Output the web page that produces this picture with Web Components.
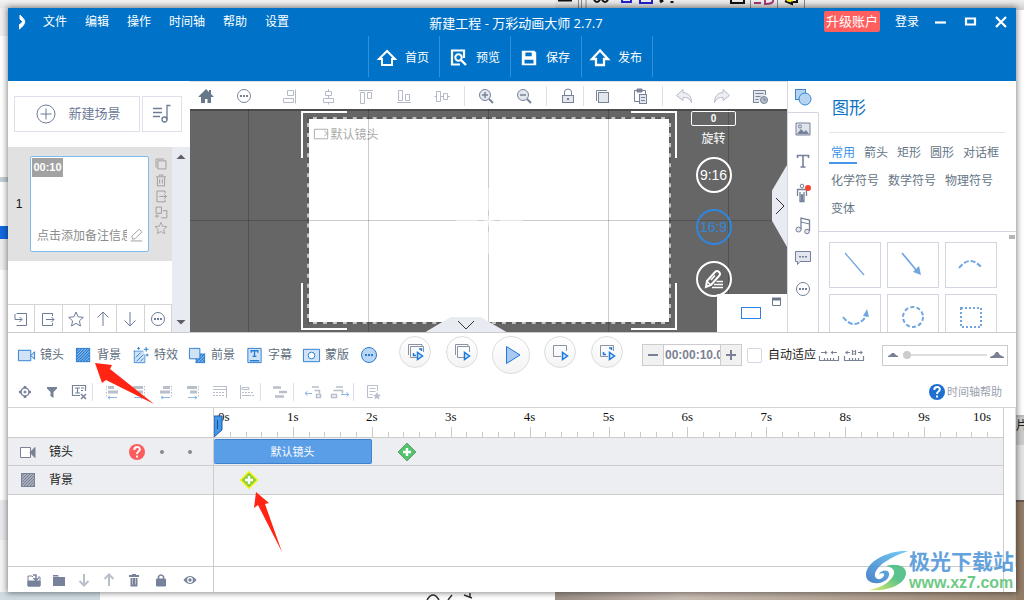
<!DOCTYPE html>
<html lang="zh-CN">
<head>
<meta charset="utf-8">
<title>新建工程 - 万彩动画大师 2.7.7</title>
<style>
html, body { height: 100%; margin: 0; }
body { font: 12px/16px "Liberation Sans", "Noto Sans CJK SC", sans-serif; color: #5c6c7c; overflow: hidden; }
</style>
</head>
<body>
<desk-top><studio-app></studio-app></desk-top>
<script>
const RESET = `
*, *::before, *::after { box-sizing: border-box; }
button, input { font: inherit; color: inherit; background: none; border: 0; padding: 0; margin: 0; border-radius: 0; min-width: 0; }
button { display: inline-flex; align-items: center; justify-content: center; white-space: nowrap; }
a { color: inherit; text-decoration: none; }
h1, h2, p { margin: 0; font-weight: normal; }
`;
const define = (tag, css, html) => customElements.define(tag, class extends HTMLElement {
  constructor() {
    super();
    this.attachShadow({ mode: 'open' });
  }
  connectedCallback() {
    if (this.shadowRoot.firstChild) return;
    const t = document.createElement('template');
    t.innerHTML = `<style>${RESET}${css}</style>` + (typeof html === 'function' ? html(this) : html);
    this.shadowRoot.append(t.content.cloneNode(true));
  }
});

const hatch = (x, y, w, h, c, bg) => {
  let d = '';
  for (let i = 3; i < w + h; i += 3) {
    const x1 = Math.min(i, w), y1 = Math.max(0, i - w), x2 = Math.max(0, i - h), y2 = Math.min(i, h);
    d += `M${x + x1} ${y + y1}L${x + x2} ${y + y2}`;
  }
  return `<rect x="${x}" y="${y}" width="${w}" height="${h}" fill="${bg}" stroke="${c}"/><path d="${d}" stroke="${c}" stroke-width="1.4"/>`;
};
const B = '#2a7dd1', L = '#cfe2f6', G = '#e3e6ec';
const diamond = (c, e) => `<path d="M10 1l9 9-9 9-9-9z" fill="${c}" stroke="${e}"/><path d="M10 6v8M6 10h8" stroke="#fff" stroke-width="2.4"/>`;
const playMini = `<path d="M12.500 10.500v7l5-3.500z" fill="#d6e8fb" stroke="#1f78dc" stroke-width="1.500"/>`;
const ICONS = {
  logo: '<path d="M8 3l4 4.500V11L8 7z" fill="#fff"/><path d="M12.500 8.500c1 3-2 6-5 8.500V12.500c2-1 3-2.500 3.500-4z" fill="#fff"/>',
  home: '<path d="M10 3L2 11h3v6h10v-6h3z" stroke-width="2"/>',
  preview: '<path d="M16 10V2.500H4v14h8" stroke-width="2.200"/><circle cx="10.500" cy="9.500" r="3.200" stroke-width="2"/><path d="M13 12l5 5" stroke-width="2.400"/>',
  save: '<path d="M2 2h14l2 2v14H2z" fill="currentColor" stroke="none"/><path d="M6 4h7v4H6zM5 12h10v4H5z" fill="#0073c8" stroke="none"/>',
  publish: '<path d="M10 2.500L2 11h4v6h8v-6h4z" stroke-width="2.300"/>',
  min: '<path d="M4 10.500h11" stroke-width="2.200"/>', max: '<path d="M5 6.500h9v6H5z" stroke-width="2.200"/>', close: '<path d="M5 5l10 10M15 5L5 15" stroke-width="2.200"/>',
  plus: '<circle cx="10" cy="10" r="9"/><path d="M10 4.500v11M4.500 10h11"/>',
  music: '<path d="M1 4.500h9M1 8.500h9M1 12.500h7M18.500 1.500h-3.500v14" stroke-width="1.300"/><circle cx="12.500" cy="15.500" r="2.500" stroke-width="1.300"/>',
  up: '<path d="M10 17V3M4.500 8.500L10 3l5.500 5.500"/>', down: '<path d="M10 3v14M4.500 11.500L10 17l5.500-5.500"/>',
  homeFill: '<path d="M10 3L2.500 10.500V11H5v6h4v-4h2.500v4H15v-6h2.500v-.5L15 8V4h-2v2z" fill="#66788a" stroke="none"/>',
  dots: '<circle cx="10" cy="10" r="6.500"/><path d="M6 9h2v2H6zM9 9h2v2H9zM12 9h2v2h-2z" fill="currentColor" stroke="none"/>',
  alignR: '<path d="M15.500 3.500v14"/><path d="M7.500 4.500h6v5h-6zM3.500 12.500h10v4h-10z"/>',
  alignC: '<path d="M10.500 3v2M10.500 9.500v3M10.500 16.500v2"/><path d="M7.500 5.500h6v4h-6zM5.500 12.500h10v4h-10z"/>',
  alignT: '<path d="M3 4.500h14M4.500 6.500h4v11h-4zM11.500 6.500h4v6h-4z"/>',
  alignB: '<path d="M3 16.500h14M4.500 4.500h4v10h-4zM11.500 8.500h4v6h-4z"/>',
  alignM: '<path d="M2.500 10.500h2M8.500 10.500h3M16 10.500h2M4.500 5.500h4v10h-4zM11.500 7.500h4v6h-4z"/>',
  zoomIn: `<circle cx="9" cy="9" r="5.500" fill="${G}"/><path d="M9 6v6M6 9h6" stroke-width="1.500"/><path d="M13 13l4 4" stroke-width="2"/>`,
  zoomOut: `<circle cx="9" cy="9" r="5.500" fill="${G}"/><path d="M6 9h6" stroke-width="1.500"/><path d="M13 13l4 4" stroke-width="2"/>`,
  lock: `<path d="M6.500 10V6q0-3 3.500-3t3.500 3v4"/><rect x="4.500" y="9.500" width="11" height="7" fill="${G}"/><path d="M9 12h2v2H9z" fill="currentColor" stroke="none"/>`,
  copy: `<path d="M4.500 15V4.500H15"/><rect x="6.500" y="6.500" width="10" height="10" fill="${G}"/>`,
  paste: `<path d="M9 15.500H4.500v-11h11V8"/><path d="M7 3h5v3H7z" fill="currentColor"/><rect x="9.500" y="8.500" width="7" height="9" fill="${G}"/><path d="M11 11.500h4M11 14.500h4"/>`,
  undo: `<path d="M9 3.500L2.500 9.500 9 14.500v-3c4-.5 6.500 1 8.500 5 0-6-3-9.500-8.500-10z" fill="#eceef2"/>`,
  redo: `<path d="M11 3.500l6.500 6-6.500 5v-3c-4-.5-6.500 1-8.500 5 0-6 3-9.500 8.500-10z" fill="#eceef2"/>`,
  history: `<path d="M9 16.500H3.500v-12h12V9" fill="${G}"/><path d="M5.500 7.500h8M5.500 10.500h5M5.500 13.500h3"/><circle cx="14" cy="14" r="3.500" fill="#b5bcc9"/><path d="M14 12v2h2"/>`,
  shapes: '<rect x="2.500" y="2.500" width="10" height="10" fill="#b5d3f3" stroke="#3c86d0"/><circle cx="12" cy="12" r="6" fill="#b5d3f3" stroke="#3c86d0"/>',
  image: '<path d="M3 4h14v12H3z" fill="#dfe3ea"/><path d="M4 15l4-5 3 3 2-2 3 4z" fill="currentColor" stroke="none"/><circle cx="7" cy="7.500" r="1.500"/>',
  text: '<path d="M4.500 7V4.500h11V7M10 4.500v11.500M7.500 16h5" stroke-width="1.600"/>',
  person: '<circle cx="9" cy="3" r="1.800"/><path d="M4.500 13V6.500h9V13M7 9v9.500h1.500V12h1v6.500H11V9" stroke-width="1.300"/><circle cx="15" cy="5" r="3" fill="#f8452e" stroke="none"/>',
  notes: `<path d="M8 14.500V3l8.500 2v11" stroke-width="1.300"/><path d="M8 7l8.500 2"/><circle cx="5.500" cy="14.500" r="2.500" fill="${G}"/><circle cx="14" cy="16.500" r="2.300" fill="${G}"/>`,
  chat: `<path d="M2.500 4.500h15v10H7l-2.500 3v-3h-2z" fill="${G}"/><path d="M6 9h2v1.500H6zM9 9h2v1.500H9zM12 9h2v1.500h-2z" fill="currentColor" stroke="none"/>`,
  dup: '<path d="M4.500 14V4.500h9"/><path d="M6.500 6.500h9v9h-9z"/>',
  trash: '<path d="M4.500 6.500h11M8 6V4.500h4V6M6 7v9.500h8V7M8.500 9v5M11.500 9v5"/>',
  exportI: '<path d="M14.500 7V4.500h-9v12h9V14M8 10.500h8M13.500 8l2.500 2.500-2.500 2.500"/>',
  importI: '<path d="M5.500 4.500h10v12h-10M4 5v5.500h7M8.500 8l2.500 2.500L8.500 13"/>',
  exportB: '<path d="M14.500 7V4.500h-10v12h10V14M8 10.500h8M13.500 8l2.500 2.500-2.500 2.500"/>',
  swap: '<path d="M4.500 4.500h6v7h-6zM12 8.500h4.500v8H10M4 14.500h4M6 12.500l-2 2 2 2"/>',
  star: '<path d="M10 3l2.100 4.800 5.200.6-3.900 3.500 1.100 5.100L10 14.400 5.500 17l1.100-5.100-3.900-3.500 5.200-.6z"/>',
  edit: '<path d="M6 13.500L5.500 10l8-7.500 3 3L9 13zM4 15.500h13"/>',
  rotateEdit: '<path d="M2 18l1-6 8-9q2-2 4 0t0 4l-8 9z" stroke-width="2"/><path d="M3 12.500l4 3.500M7 11l4-4.500" stroke-width="1.500"/><path d="M12.500 12.500H19M10 15.500h9M8 18.500h11" stroke-width="1.500"/>',
  camera: `<path d="M1.500 4.500h13v11h-13z" fill="${L}" stroke="${B}"/><path d="M14.500 10l4-4v8z" fill="${L}" stroke="${B}"/>`,
  cameraG: '<path d="M2.500 5.500h10v10h-10z" fill="#fff"/><path d="M12 10.500l5-5v10z" fill="currentColor"/>',
  cameraL: '<path d="M2.500 4.500h14v10h-14zM16 9l-3-2.500M16 9l-3 2.500"/>',
  bg: hatch(2.5, 2.5, 14, 14, B, '#a9cff4'),
  bgG: hatch(3.5, 3.5, 13, 13, '#7b8194', '#cdd1da'),
  effect: `<path d="M3 5.500h10M3.500 5v12.500h11V9" stroke="${B}"/><path d="M4 6h10v11H4z" fill="${L}" stroke="none"/><path d="M5 12l5-5M6 16l7-7M10 16l3-3" stroke="${B}"/><path d="M16 1v5M13.500 3.500h5M8 1v3M6.500 2.500h3M17 8v3M15.500 9.500h3" stroke="${B}"/>`,
  fg: hatch(8.500, 8.500, 9, 9, B, '#a9cff4') + `<path d="M1.500 2.500h11v11h-11z" fill="${L}" stroke="${B}"/>`,
  caption: `<path d="M3 2.500h14v15H3z" fill="${L}" stroke="${B}"/><path d="M6.500 7V5h7v2M10 5v6M8 11h4M5 15.500h10" stroke="${B}" stroke-width="1.400"/>`,
  mask: `<path d="M1.500 3.500h17v13h-17z" fill="${L}" stroke="${B}"/><circle cx="10" cy="10" r="3.500" fill="#fff" stroke="${B}"/>`,
  more: `<circle cx="10" cy="10" r="7.500" fill="#b9d7f5" stroke="${B}"/><path d="M6 9h2v2H6zM9 9h2v2H9zM12 9h2v2h-2z" fill="${B}" stroke="none"/>`,
  p1: '<path d="M3.500 13V2.500H17V5" stroke="#8a93a3"/><path d="M5.500 4.500h13V10M5.500 4.500v11H12" stroke="#8a93a3"/><path d="M8.500 11v2.500H11M14 7h2.500v2" stroke="#1f78dc" stroke-width="1.500"/>' + playMini,
  p2: '<path d="M3.500 13V2.500H16V5" stroke="#8a93a3"/><path d="M12 15.500H5.500v-11h12V10" stroke="#8a93a3"/>' + playMini,
  play: '<path d="M5.500 1.500v17l13.500-8.500z" fill="#a9c9f0" stroke="#1f78dc"/>',
  p4: '<path d="M11 14.500H3.500v-11h13V9" stroke="#8a93a3"/>' + playMini,
  p5: '<path d="M11 14.500H3.500v-11h13V9" stroke="#8a93a3"/><path d="M6.500 10v2.500H9M12 6h2.500v2" stroke="#1f78dc" stroke-width="1.500"/>' + playMini,
  minus: '<path d="M5 10h10" stroke-width="2"/>', add: '<path d="M5 10h10M10 5v10" stroke-width="2"/>',
  fitW: '<path d="M0.500 11v4.500h19V11M5.500 13v2M8.500 13v2M11.500 13v2M14.500 13v2M2 7.500h6M12 7.500h6" stroke-width="1.200"/><path d="M8.500 7.500L6 5.500v4zM11.500 7.500L14 5.500v4z" fill="currentColor" stroke="none"/>',
  fit1: '<path d="M0.500 11v4.500h19V11M5.500 13v2M8.500 13v2M11.500 13v2M14.500 13v2M2 7.500h4M14 7.500h4M8.500 5v5M11.500 5v5M10 6v1M10 8.500v1" stroke-width="1.200"/><path d="M1 7.500l2.500-2v4zM19 7.500l-2.500-2v4z" fill="currentColor" stroke="none"/>',
  hillS: '<path d="M5 12h10v-1l-2-1-2-2h-2l-2 2-2 1z" fill="currentColor" stroke="none"/>',
  hillL: '<path d="M3 13h14v-1l-4-2-2-3h-2l-2 3-4 2z" fill="currentColor" stroke="none"/>',
  target: '<circle cx="10" cy="10" r="4" stroke-width="1.500"/><path d="M10 4v2M10 14v2M4 10h2M14 10h2" stroke-width="2.500"/><circle cx="10" cy="10" r="1" fill="currentColor"/>',
  filter: '<path d="M5 5h10v1.500L11.500 10v6l-3-2v-4L5 6.500z" fill="currentColor" stroke="none"/>',
  textX: '<path d="M11 13.500H3.500v-10h13V9M6 6h5M8.500 6v5M12 6h3M12 8.500h2M6 11h5" stroke-width="1.200"/><path d="M12 12l5 5M17 12l-5 5" stroke-width="1.500"/>',
  a1: '<path d="M4.500 4v12" stroke-dasharray="1.500 1.500"/><path d="M6 5.500h6M6 10h10" stroke-width="3"/><path d="M6 15.500h9M8 14l-2 1.500L8 17" stroke="#8ab6e4"/>',
  a2: '<path d="M15.500 4v12" stroke-dasharray="1.500 1.500"/><path d="M4 5.500h10M7 10h7" stroke-width="3"/><path d="M5 15.500h9M12 14l2 1.500-2 1.500" stroke="#8ab6e4"/>',
  a3: '<path d="M15.500 4v12" stroke-dasharray="1.500 1.500"/><path d="M7 5.500h7M4 10h10" stroke-width="3"/><path d="M5 15.500h9M7 14l-2 1.500L7 17" stroke="#8ab6e4"/>',
  a4: '<path d="M3 4.500h14M3 7.500h14M16.500 4v12"/><path d="M3 10.500h12M3 13.500h12" stroke-dasharray="2 1"/>',
  a5: '<path d="M3.500 3v14M5 5.500h7v2H5zM5 13.500h7"/><path d="M5 10.500h12M9 13.500h8" stroke-dasharray="2 1"/>',
  a6: '<path d="M3 5.500h8M9 10h8M5 14.500h9" stroke-width="2.500"/>',
  a7: '<path d="M9 5h7M11.500 8.500h5v3M13.500 12.500h4v3h-4z" stroke-width="1.500"/><path d="M2 11.500h7M4.500 9.500l-2.500 2 2.500 2" stroke="#8ab6e4"/>',
  a8: '<path d="M6 5h7M3.500 8.500h9v3M1.500 12.500h5v3h-5z" stroke-width="1.500"/><path d="M11 12.500h8M16.500 10.500l2.500 2-2.500 2" stroke="#8ab6e4"/>',
  noteStar: '<path d="M10 15.500H4.500v-12h10V9M6.500 6.500h6M6.500 9.500h6M6.500 12.500h3"/><path d="M14 10l1.200 2.600 2.800.3-2.100 1.900.6 2.700L14 16l-2.500 1.500.6-2.700L10 12.900l2.800-.3z" fill="currentColor" stroke="none"/>',
  fImport: '<path d="M4 6h4l1 1M4 6v10h12V7h-2" fill="none"/><path d="M4 11h12v5H4z" fill="currentColor"/><path d="M9 5h3v5M9.500 8l2.500 2.500L14.500 8" stroke-width="1.500"/>',
  folder: '<path d="M4 5h5l1 1.500h-6zM4 7h12v9H4z" fill="currentColor" stroke="none"/>',
  arD: '<path d="M10 4v11M5.500 11l4.500 4.500 4.500-4.500" stroke-width="2"/>', arU: '<path d="M10 16V5M5.500 9L10 4.500 14.500 9" stroke-width="2"/>',
  trashF: '<path d="M5 6h10M8 5h4M7.500 8v7.500h5V8M10 8v7" stroke-width="2"/>',
  lockF: '<path d="M5.500 9h9v7h-9z" fill="currentColor"/><path d="M7.500 9V6.500Q10 3.500 12.500 6.500V9" stroke-width="1.500"/>',
  eye: '<path d="M3.500 10Q10 2 16.500 10 10 18 3.500 10z" fill="currentColor" stroke="none"/><circle cx="10" cy="10" r="2.300" stroke="#fff" stroke-width="1.200"/>',
  help: '<circle cx="10" cy="10" r="8" fill="currentColor" stroke="none"/><path d="M7.300 8q0-3 2.800-3t2.700 2.500q0 1.200-1.400 2T10 12" stroke="#fff" stroke-width="2"/><path d="M9 13.500h2v2H9z" fill="#fff" stroke="none"/>',
  addG: diamond('#52c46c', '#6f9a78'),
  addY: '<path d="M10 1l9 9-9 9-9-9z" fill="#f6f619" stroke="#f6f619"/><path d="M10 2.500l7.500 7.500-7.500 7.500L2.500 10z" fill="#8ed03c" stroke="none"/><path d="M10 6v8M6 10h8" stroke="#fff" stroke-width="2.400"/>',
  triU: '<path d="M5.500 12l4.500-4.500 4.500 4.500z" fill="#5f5f66" stroke="none"/>', triD: '<path d="M5.500 8l4.500 4.500L14.500 8z" fill="#5f5f66" stroke="none"/>',
  win: '<path d="M5.500 6.500h8v7h-8z" stroke="#66788a"/><path d="M5 7h9" stroke="#66788a" stroke-width="3"/>',
  sLine: '<path d="M10 5l19 22" stroke-width="1.300"/>',
  sArrow: '<path d="M9 5l15 18" stroke-width="1.700"/><path d="M28 27l-8-3 6-6z" fill="currentColor" stroke="none"/>',
  sArc: '<path d="M8 20q11-14 23 0" stroke-width="2" stroke-dasharray="5 2"/>',
  sArcA: '<path d="M8 17q10 13 21 2l2-4" stroke-width="2" stroke-dasharray="5 2"/><path d="M28 16l4-7 2 8z" fill="currentColor" stroke="none"/>',
  sCirc: '<circle cx="20" cy="17" r="10" stroke-width="2" stroke-dasharray="4 2.300"/>',
  sRect: '<rect x="10" y="8" width="20" height="19" stroke-width="2" stroke-dasharray="2 2"/>'
};

define('x-icon', `:host { display: inline-block; flex: none; line-height: 0; } svg { display: block; overflow: visible; }`, el => {
  const s = el.getAttribute('size') || 20, vb = el.getAttribute('box') || '0 0 20 20';
  return `<svg width="${s}" height="${s}" viewBox="${vb}" fill="none" stroke="currentColor" aria-hidden="true">${ICONS[el.getAttribute('name')]}</svg>`;
});
const tool = (name, label, cls = '', size = 20) => `<button class="${cls}" aria-label="${label}"><x-icon name="${name}" size="${size}"></x-icon></button>`;

define('desk-top', `
:host { display: block; position: relative; height: 100%; padding: 8px; box-sizing: border-box; overflow: hidden;
  background:
   linear-gradient(#f2f2f2, #e6e6e6) left top / 555px 8px no-repeat,
   linear-gradient(#eee, #d4d4d4) right top / calc(100% - 555px) 10px no-repeat,
   linear-gradient(#fff 0 405px, #bbb 405px 407px, #ccc 407px 435px, #e4e4e4 435px 490px, #67594f 490px 492px, #947d68 492px) right 10px / 8px 100% no-repeat,
   linear-gradient(90deg, #cfdbe0 0 100px, #fff 100px 555px, #9b8f86 555px, #c9bdb4 680px, #9b8672) left bottom / 100% 8px no-repeat,
   linear-gradient(#f0f0f0 0 36px, #fff 36px 177px, #c3cfd5 177px 182px, #fff 182px 226px, #1169e0 226px 239px, #eee 239px 270px, #fff 270px 500px, #e8eaee 500px 540px, #f4f4f4 540px) left top / 8px 100% no-repeat; }
.scrap { position: absolute; display: block; }
.top { left: 555px; top: 0; } .bottom { left: 420px; bottom: 0; }
.side { right: 0; top: 418px; width: 8px; overflow: hidden; color: #222; }
.win { position: relative; height: 100%; background: #fff; box-shadow: 0 0 6px 1px #0007; }
`, `
<svg class="scrap top" width="260" height="8" fill="none" stroke="#111" aria-hidden="true"><path d="M3 .5h14" stroke-width="2"/><path d="M23.500 0v8M26.500 0v8M31 0v8" stroke="#888"/><path d="M39 0q3 4 6 0M47 0q3 4 6 0" stroke-width="2"/><path d="M67 0v2h9V0M85 0v3h12V0" stroke="#22c" stroke-width="2"/><path d="M105 2l3-2M117 1v2" stroke-width="3"/><path d="M176 0v3h13V0" stroke-width="2"/><path d="M195.500 0v8M222.500 0v8M249.500 0v8" stroke="#888"/><path d="M199 3h7M210 0v4q9 0 8-4" stroke="#a33775" stroke-width="2"/><path d="M230 1l7 3v-2h5V0" stroke="#111" stroke-width="2"/><path d="M232 0h6" stroke="#fe0" stroke-width="3"/></svg>
<svg class="scrap bottom" width="60" height="7" fill="none" stroke="#333" stroke-width="1.500" aria-hidden="true"><path d="M7 7q6-10 12 0M28 7l4-5M44 2l8 3M50 0v5"/></svg>
<span class="scrap side">片</span>
<div class="win"><slot></slot></div>`);

define('title-bar', `
:host { display: grid; grid-template-rows: 28px 45px; background: #0073c8; color: #fff; }
.row { display: grid; grid-template-columns: 1fr auto 1fr; align-items: center; }
nav, .right { display: flex; align-items: center; }
nav { gap: 18px; padding-left: 4px; }
nav x-icon { margin-right: -7px; }
h1 { font: 13px/20px "Open Sans", "Noto Sans CJK SC", sans-serif; padding: 2px 0 0 8px; }
.right { justify-content: flex-end; }
.up { background: #ff5f5f; border-radius: 2px; height: 21px; padding: 0 2px; font-size: 13px; line-height: 20px; align-self: start; margin-top: 2px; }
.login { margin: 0 7px 0 15px; }
.w { width: 30px; height: 26px; }
.main { display: flex; justify-content: center; padding-bottom: 4px; margin-left: -3px; }
.main button { width: 71px; gap: 8px; border-left: 1px solid #2d91db; padding: 2px 2px 0 0; }
.main button:last-child { border-right: 1px solid #2d91db; width: 72px; }
`, `
<div class="row"><nav><x-icon name="logo"></x-icon><button>文件</button><button>编辑</button><button>操作</button><button>时间轴</button><button>帮助</button><button>设置</button></nav>
<h1>新建工程 - 万彩动画大师 2.7.7</h1>
<div class="right"><button class="up">升级账户</button><button class="login">登录</button>${tool('min', '最小化', 'w')}${tool('max', '最大化', 'w')}${tool('close', '关闭', 'w')}</div></div>
<div class="main"><button><x-icon name="home"></x-icon>首页</button><button><x-icon name="preview"></x-icon>预览</button><button><x-icon name="save" size="18"></x-icon>保存</button><button><x-icon name="publish"></x-icon>发布</button></div>`);

define('scene-panel', `
:host { display: flex; flex-direction: column; background: #fff; color: #6d7b98; min-height: 0; }
.new { display: grid; grid-template-columns: 1fr 40px; gap: 2px; padding: 15px 8px 15px 6px; height: 66px; }
.new button { border: 1px solid #dde1ea; gap: 12px; font-size: 13px; padding-left: 3px; }
.new button + button { padding: 0; }
.body { flex: 1; display: grid; grid-template-columns: 1fr 18px; min-height: 0; }
.list { display: flex; flex-direction: column; justify-content: space-between; min-width: 0; }
.scene { background: #e1e1e1; display: grid; grid-template-columns: 22px 119px 1fr; padding: 9px 0; color: #999; }
.no { color: #111; place-self: center; }
.card { height: 96px; border: 1px solid #7cbdf0; border-radius: 2px; background: #fff; display: flex; flex-direction: column; justify-content: space-between; align-items: flex-start; padding: 1px; }
.time { background: #a2a2a2; color: #fff; font-size: 11px; font-weight: bold; line-height: 19px; padding: 0 1px; width: 31px; text-align: center; }
.memo { display: flex; align-items: center; padding: 0 0 3px 5px; height: 26px; }
.memo input { width: 90px; color: #8b8b8b; text-overflow: clip; }
.acts { display: flex; flex-direction: column; align-items: center; }
.acts button { height: 16px; width: 20px; }
.bar { display: grid; grid-template-columns: repeat(6, 1fr); border-top: 1px solid #d4d4d4; height: 28px; }
.bar button { border-right: 1px solid #d4d4d4; }
.scroll { background: #e8ebf1; display: flex; flex-direction: column; justify-content: space-between; align-items: center; }
`, `
<div class="new"><button><x-icon name="plus"></x-icon>新建场景</button>${tool('music', '背景音乐')}</div>
<div class="body"><div class="list"><div class="scene"><span class="no">1</span>
<div class="card"><span class="time">00:10</span><label class="memo"><input value="点击添加备注信息" aria-label="备注"><x-icon name="edit" size="18"></x-icon></label></div>
<div class="acts">${tool('dup', '复制', '', 18)}${tool('trash', '删除', '', 18)}${tool('exportI', '导出', '', 18)}${tool('swap', '替换', '', 18)}${tool('star', '收藏', '', 16)}</div></div>
<div class="bar">${tool('importI', '导入场景')}${tool('exportB', '导出场景')}${tool('star', '收藏场景')}${tool('up', '上移')}${tool('down', '下移')}${tool('dots', '更多')}</div></div>
<div class="scroll"><x-icon name="triU"></x-icon><x-icon name="triD"></x-icon></div></div>`);

define('edit-bar', `
:host { display: flex; align-items: center; height: 28px; padding-left: 1px; color: #78839a; border-top: 1px solid #dcdfe8; background: #fff; }
div { display: flex; gap: 8px; }
button { width: 30px; height: 26px; }
.pale { color: #b4bac8; }
i { width: 14px; height: 20px; background: linear-gradient(#dfe1e8, #dfe1e8) 7px 0 / 1px 100% no-repeat; }
i.none { width: 16px; background: none; } i.s { width: 4px; background-position-x: 0; }
`, `
<div>${tool('homeFill', '主页')}${tool('dots', '更多')}</div><i class="none"></i>
<div class="pale">${tool('alignR', '右对齐')}${tool('alignC', '居中')}${tool('alignT', '顶对齐')}${tool('alignB', '底对齐')}${tool('alignM', '垂直居中')}</div><i></i>
<div>${tool('zoomIn', '放大')}${tool('zoomOut', '缩小')}</div><i></i>
<div>${tool('lock', '锁定')}</div><i class="s"></i>
<div>${tool('copy', '复制')}${tool('paste', '粘贴')}</div><i></i>
<div>${tool('undo', '撤销', 'pale')}${tool('redo', '重做', 'pale')}${tool('history', '历史')}</div>`);

define('stage-view', `
:host { display: grid; position: relative; overflow: hidden; background: #666; place-items: center; min-height: 0; }
.frame, .guides, .corners { grid-area: 1 / 1; }
.frame { width: 364px; height: 207px; border: 2px dashed #5c5c5c; background: linear-gradient(#fff, #fff) padding-box, #c4c4c4 border-box; display: flex; align-items: flex-start; padding: 6px 3px; color: #aaa; }
.frame span { line-height: 20px; }
.guides { width: 100%; height: 100%; background:
  linear-gradient(#0003, #0003) center / 1px 100% no-repeat, linear-gradient(#0003, #0003) calc(50% - 120px) 0 / 1px 100% no-repeat, linear-gradient(#0003, #0003) calc(50% + 120px) 0 / 1px 100% no-repeat,
  linear-gradient(#0003, #0003) calc(50% - 240px) 0 / 1px 100% no-repeat, linear-gradient(#0003, #0003) calc(50% + 240px) 0 / 1px 100% no-repeat, linear-gradient(#0003, #0003) center / 100% 1px no-repeat, linear-gradient(#0004, #0004) 0 0 / 100% 2px no-repeat; }
.corners { width: 376px; height: 219px; }
.cross { grid-area: 1 / 1; }
.tools { position: absolute; right: 51px; top: 2px; display: flex; flex-direction: column; align-items: center; color: #fff; width: 45px; }
.tools input { width: 45px; height: 15px; border: 1px solid #fff; border-radius: 2px; text-align: center; font: bold 10px/13px "Liberation Sans", sans-serif; }
.tools label { margin: 0 0 10px; display: flex; flex-direction: column; gap: 5px; align-items: center; }
.tools button { width: 36px; height: 36px; border: 2px solid #fff; border-radius: 50%; font-size: 14px; margin-bottom: 16px; }
.tools .on { color: #2f86dd; border-color: #2f86dd; }
.tab { position: absolute; background: #e8ebf1; color: #333; }
.b { left: calc(50% - 63px); bottom: 0; width: 81px; height: 15px; clip-path: polygon(0 100%, 31% 0, 68% 0, 100% 100%); }
.r { right: 0; top: 56px; width: 15px; height: 82px; clip-path: polygon(0 31%, 100% 0, 100% 100%, 0 68%); }
.mini { position: absolute; right: 0; bottom: 0; width: 70px; height: 38px; background: #fff; display: flex; align-items: center; justify-content: flex-end; }
.mini i { width: 20px; height: 12px; border: 1px solid #2f7fe8; margin-right: 6px; }
.mini x-icon { align-self: flex-start; margin-top: -2px; }
`, `
<div class="frame"><x-icon name="cameraL" size="19"></x-icon><span>默认镜头</span></div>
<div class="guides"></div>
<svg class="corners" viewBox="0 0 376 219" fill="none" stroke="#fff" stroke-width="2" aria-hidden="true"><path d="M1 47V1H46M330 1H375V47M375 172V218H330M46 218H1V172"/></svg>
<svg class="cross" width="66" height="66" stroke="#fff" aria-hidden="true"><path d="M0 33.500h22M28 33.500h10M44 33.500h22M33.500 0v22M33.500 28v10M33.500 44v22" stroke-width="2"/></svg>
<div class="tools"><label><input value="0" aria-label="旋转角度"><span>旋转</span></label><button>9:16</button><button class="on">16:9</button><button aria-label="自定义"><x-icon name="rotateEdit" size="20"></x-icon></button></div>
<button class="tab b" aria-label="收起"><svg width="18" height="10" fill="none" stroke="currentColor"><path d="M1 1l8 8 8-8"/></svg></button>
<button class="tab r" aria-label="收起面板"><svg width="10" height="18" fill="none" stroke="currentColor"><path d="M1 1l8 8-8 8"/></svg></button>
<div class="mini"><i></i><x-icon name="win"></x-icon></div>`);

define('side-tabs', `
:host { display: flex; flex-direction: column; border-left: 1px solid #d2d6e0; background: #fff; color: #75809a; }
button { height: 32px; border-right: 1px solid #d2d6e0; flex: none; }
button.first { border-right-color: transparent; border-bottom: 1px solid #d2d6e0; }
.fill { flex: 1; border-right: 1px solid #d2d6e0; }
`, `${tool('shapes', '图形', 'first')}${tool('image', '图片')}${tool('text', '文本')}${tool('person', '角色')}${tool('notes', '音乐')}${tool('chat', '气泡')}${tool('dots', '更多')}<div class="fill"></div>`);

define('shape-panel', `
:host { display: flex; flex-direction: column; background: #fff; color: #667686; min-height: 0; }
h2 { font-size: 17px; line-height: 24px; color: #0b72c4; padding: 16px 3px 11px; margin: 0 11px 0 10px; border-bottom: 1px solid #e3e6ec; }
nav { display: flex; flex-wrap: wrap; gap: 7px 9px; padding: 10px 8px 11px 12px; border-bottom: 1px solid #d2d6e0; }
nav button { height: 21px; border-bottom: 2px solid transparent; font-size: 12px; }
nav .on { color: #3b93ea; border-color: #4697e8; padding: 0 2px; margin: 0 -2px; }
.wrap { flex: 1; min-height: 0; overflow: hidden; display: flex; justify-content: space-between; }
.grid { display: grid; grid-template-columns: repeat(3, 52px); grid-auto-rows: 46px; gap: 6px; padding: 10px; color: #6fa6df; }
.grid button { border: 1px solid #d2d6e0; }
.thumb { width: 6px; height: 4px; background: #b5b5b5; margin: 3px 1px 0 0; }
`, () => `
<h2>图形</h2><nav><button class="on">常用</button><button>箭头</button><button>矩形</button><button>圆形</button><button>对话框</button><button>化学符号</button><button>数学符号</button><button>物理符号</button><button>变体</button></nav>
<div class="wrap"><div class="grid">${[['sLine', '直线'], ['sArrow', '箭头'], ['sArc', '弧线'], ['sArcA', '弧线箭头'], ['sCirc', '圆'], ['sRect', '方形']].map(([n, l]) => `<button aria-label="${l}"><x-icon name="${n}" size="40" box="0 0 40 34"></x-icon></button>`).join('')}</div><div class="thumb"></div></div>`);

define('play-bar', `
:host { display: grid; grid-template-columns: auto 1fr auto; align-items: center; height: 44px; padding: 0 8px 0 9px; }
div { display: flex; align-items: center; }
.add button { width: 57px; gap: 4px; justify-content: flex-start; }
.add .more { width: 20px; }
.play { justify-content: center; gap: 15px; padding-left: 2px; }
.play button { width: 32px; height: 32px; border: 1px solid #ddd; border-radius: 50%; background: linear-gradient(#fff, #f4f4f4); margin-bottom: 6px; }
.play .big { width: 38px; height: 38px; margin: 0 -1px; }
.spin { border: 1px solid #ccc; height: 22px; color: #7b8194; }
.spin button { width: 21px; height: 20px; background: #f1f1f1; border-right: 1px solid #ccc; }
.spin button:last-child { border-right: 0; border-left: 1px solid #ccc; }
.spin input { width: 56px; font-weight: bold; text-overflow: clip; padding-left: 1px; }
input[type=checkbox] { appearance: none; width: 15px; height: 15px; border: 1px solid #cfd8e4; border-radius: 2px; margin: 0 6px 0 5px; }
label { display: flex; align-items: center; color: #222; }
.fit { color: #7b8194; gap: 5px; margin-left: 3px; }
.zoom { border: 1px solid #ccc; height: 21px; margin-left: 18px; color: #7b8194; }
input[type=range] { appearance: none; width: 84px; height: 20px; }
input[type=range]::-webkit-slider-runnable-track { height: 2px; background: #ddd; }
input[type=range]::-webkit-slider-thumb { appearance: none; width: 8px; height: 8px; margin-top: -3px; border-radius: 50%; background: #ccc; }
`, `
<div class="add"><button><x-icon name="camera" size="19"></x-icon>镜头</button><button><x-icon name="bg" size="19"></x-icon>背景</button><button><x-icon name="effect" size="19"></x-icon>特效</button><button><x-icon name="fg" size="19"></x-icon>前景</button><button><x-icon name="caption" size="19"></x-icon>字幕</button><button><x-icon name="mask" size="19"></x-icon>蒙版</button>${tool('more', '更多', 'more')}</div>
<div class="play">${tool('p1', '播放全部镜头')}${tool('p2', '播放全部')}${tool('play', '播放', 'big')}${tool('p4', '播放场景')}${tool('p5', '播放镜头')}</div>
<div><div class="spin">${tool('minus', '减少')}<input value="00:00:10.00" aria-label="时长">${tool('add', '增加')}</div><label><input type="checkbox">自动适应</label><div class="fit">${tool('fitW', '适应宽度')}${tool('fit1', '原始比例')}</div><div class="zoom"><x-icon name="hillS"></x-icon><input type="range" value="0" aria-label="缩放"><x-icon name="hillL"></x-icon></div></div>`);

define('track-bar', `
:host { display: flex; align-items: center; height: 30px; padding: 0 14px 0 3px; color: #77829a; }
button { width: 27px; height: 24px; }
.pale { color: #b9bfca; }
i { width: 6px; height: 18px; border-left: 1px solid #dfe1e8; }
a { margin-left: auto; display: flex; align-items: center; font-size: 11px; color: #98a2ae; }
a x-icon { color: #1f6fd0; }
`, `${tool('target', '定位')}${tool('filter', '筛选')}${tool('textX', '清除')}<i></i>${['a1', 'a2', 'a3', 'a2', 'a4', 'a5'].map((n, k) => tool(n, '对齐' + (k + 1), 'pale')).join('')}<i></i>${tool('a6', '排列', 'pale')}<i></i>${tool('a7', '前移', 'pale')}${tool('a8', '后移', 'pale')}<i></i>${tool('noteStar', '备注', 'pale')}
<a href="#help"><x-icon name="help"></x-icon>时间轴帮助</a>`);

define('time-ruler', `
:host { display: grid; grid-template-columns: repeat(10, 1fr); position: relative; font: 13px/16px "Liberation Serif", serif; color: #111; height: 100%; }
.sec { position: relative; display: grid; grid-template-columns: repeat(5, 1fr); align-items: end; }
.sec i { height: 5px; border-left: 1px solid #ccc; }
.sec i:first-of-type { height: 10px; }
.sec span { position: absolute; top: 1px; left: 0; transform: translateX(-50%); }
.sec .zero { left: 4px; transform: none; }
.end { position: absolute; right: 12px; top: 1px; }
.head { position: absolute; left: 0; top: 7px; }
`, () => Array.from({ length: 10 }, (_, i) => `<div class="sec"><span${i ? '' : ' class="zero"'}>${i}s</span><i></i><i></i><i></i><i></i><i></i></div>`).join('') + `<span class="end">10s</span><svg class="head" width="9" height="23" aria-hidden="true"><path d="M0 1h8v14l-8 7z" fill="#4596e6" stroke="#1b5fa8"/><path d="M3.500 5v9" stroke="#174f8f"/></svg>`);

define('time-line', `
:host { display: flex; flex-direction: column; background: #fff; border-top: 1px solid #ccc; min-height: 0; }
.tracks { flex: 1; display: grid; grid-template-columns: 206px 1fr 12px; grid-template-rows: 30px 28px 29px 1fr 25px; border-top: 1px solid #d4d4d4; }
.tracks > * { border-bottom: 1px solid #ccc; border-right: 1px solid #ccc; }
.tracks > .edge { border-bottom: 0; border-right-color: #ddd; grid-column: 3; grid-row: 1 / 5; }
.foot, .foot2, .foot3 { border-bottom: 0 !important; }
.foot3 { border-right: 0 !important; }
.row { background: #edeef2; display: flex; align-items: center; position: relative; }
.name { padding-left: 10px; color: #222; background: #edeef2; display: flex; align-items: center; }
.name span { margin-left: 11px; }
.name > x-icon { color: #7b8194; }
.name .q { color: #fb5d5d; margin-left: 54px; }
.name i { width: 4px; height: 4px; border-radius: 50%; background: #888; margin-left: 13px; margin-right: 11px; }
.clip { width: 20%; height: 25px; background: #5a9ee8; border: 1px solid #3e82cc; border-left: 0; border-radius: 2px; color: #fff; font-size: 11px; }
.g, .y { margin-left: 25px; }
.foot { display: flex; align-items: center; padding-left: 13px; color: #77829a; }
.foot button { width: 25px; } .foot .wide { width: 29px; } .foot .pale { color: #b9bfca; }
`, `
<play-bar></play-bar><track-bar></track-bar>
<div class="tracks"><div></div><div><time-ruler></time-ruler></div><div class="edge"></div>
<div class="name"><x-icon name="cameraG"></x-icon><span>镜头</span>${tool('help', '帮助', 'q')}<i></i><i></i></div><div class="row"><button class="clip">默认镜头</button>${tool('addG', '添加镜头', 'g')}</div>
<div class="name"><x-icon name="bgG"></x-icon><span>背景</span></div><div class="row">${tool('addY', '添加背景', 'y')}</div>
<div></div><div></div>
<div class="foot">${tool('fImport', '导入')}${tool('folder', '文件夹')}${tool('arD', '下移', 'pale')}${tool('arU', '上移', 'pale')}${tool('trashF', '删除')}${tool('lockF', '锁定', 'wide')}${tool('eye', '显示', 'wide')}</div><div class="foot2"></div><div class="foot3"></div></div>`);

define('site-mark', `
:host { display: flex; align-items: center; opacity: .85; }
p { font: bold 21px/24px "Liberation Sans", "Noto Sans CJK SC", sans-serif; color: #4a92d8; }
p + p { font: bold 16px/18px "Liberation Sans", sans-serif; color: #55c070; }
`, `<svg width="44" height="42" viewBox="0 0 44 42" aria-hidden="true"><defs><linearGradient id="b" x1="0" y1="1" x2="1" y2="0"><stop stop-color="#2d6fc0"/><stop offset="1" stop-color="#5cc4f4"/></linearGradient><linearGradient id="g" x1="0" y1="1" x2="1" y2="0"><stop stop-color="#dfe84a"/><stop offset=".6" stop-color="#3fb97a"/></linearGradient></defs>
<path d="M43 1C24 0 1 11 1 25c0 6 6 9 13 8 7-1 11-6 10-10-1-4-8-3-10 1 4-2 7 0 4 3-3 4-9 2-8-3C12 15 26 7 43 1z" fill="url(#b)"/><path d="M21 16c9-3 20-1 20 7 0 10-16 19-37 17 12-2 22-8 25-16 1-4-2-7-8-8z" fill="url(#g)"/></svg><div><p>极光下载站</p><p>www.xz7.com</p></div>`);

define('studio-app', `
:host { display: grid; grid-template-rows: auto minmax(0, 1fr) 260px; height: 100%; position: relative; }
.mid { display: grid; grid-template-columns: 182px minmax(0, 1fr) 32px 197px; min-height: 0; }
.center { display: flex; flex-direction: column; min-height: 0; }
stage-view { flex: 1; }
.note { position: absolute; pointer-events: none; }
.n1 { left: 86px; bottom: 187px; } .n2 { left: 245px; bottom: 38px; }
site-mark { position: absolute; right: 2px; bottom: 0; }
`, `
<title-bar></title-bar>
<div class="mid"><scene-panel></scene-panel><div class="center"><edit-bar></edit-bar><stage-view></stage-view></div><side-tabs></side-tabs><shape-panel></shape-panel></div>
<time-line></time-line>
<svg class="note n1" width="62" height="44" aria-hidden="true"><path d="M1 2l17 2-2 4 44 35L12 19l-4 3z" fill="#ff2413"/></svg>
<svg class="note n2" width="32" height="64" aria-hidden="true"><path d="M3 2l13 11-4 1 17 48L5 15l-4 3z" fill="#ff2413"/></svg>
<site-mark></site-mark>`);
</script>
</body>
</html>
